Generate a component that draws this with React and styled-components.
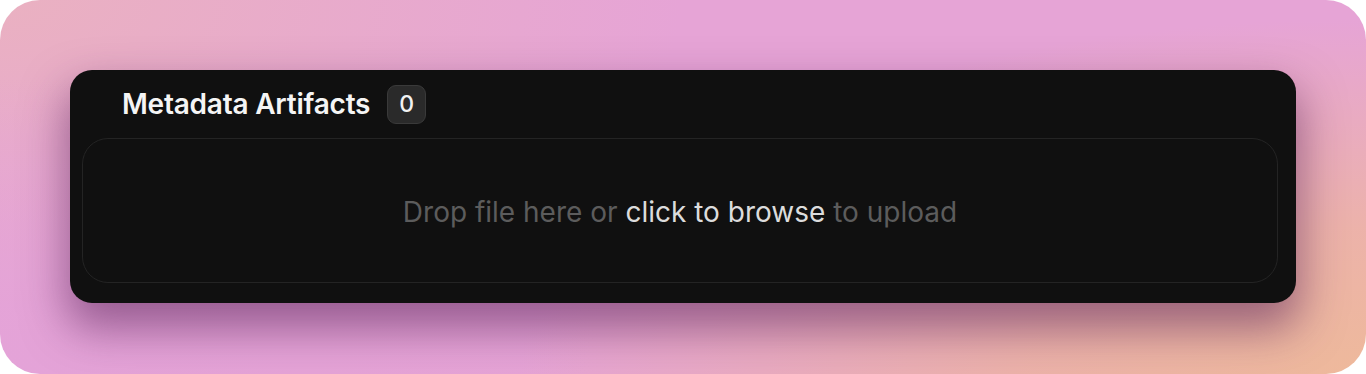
import React from "react";
import styled, { createGlobalStyle } from "styled-components";

const Global = createGlobalStyle`
  html, body { margin: 0; padding: 0; background: #ffffff; }
  * { box-sizing: border-box; }
  body { font-family: Inter, "Noto Sans", sans-serif; }
`;

const Backdrop = styled.div`
  width: 1366px;
  height: 374px;
  border-radius: 40px;
  overflow: hidden;
  padding: 70px 70px 71px 70px;
  background:
    radial-gradient(ellipse 62% 95% at 100% 100%, #eeb99b 0%, rgba(238,182,158,0.8) 40%, rgba(233,170,190,0) 100%),
    radial-gradient(ellipse 45% 80% at 0% 100%, #e4a3d8 0%, rgba(228,163,216,0) 100%),
    radial-gradient(ellipse 50% 90% at 0% 0%, #eab1c1 0%, rgba(234,177,193,0) 100%),
    #e6a4d6;
`;

const Card = styled.section`
  height: 233px;
  background: #101010;
  border-radius: 22px;
  padding: 0 18px 20px 12px;
  display: flex;
  flex-direction: column;
  box-shadow: 0 22px 44px 4px rgba(90, 35, 90, 0.55);
`;

const Header = styled.div`
  height: 68px;
  display: flex;
  align-items: center;
  gap: 17px;
  padding-left: 40px;
`;

const Title = styled.h2`
  margin: 0;
  font-family: Inter, sans-serif;
  font-weight: 600;
  font-size: 28px;
  letter-spacing: -0.22px;
  color: #f5f5f5;
`;

const Badge = styled.span`
  min-width: 39px;
  height: 39px;
  padding: 0 10px;
  border-radius: 9px;
  background: #2a2a2a;
  border: 1px solid #3a3a3a;
  color: #f2f2f2;
  font-family: Inter, sans-serif;
  font-weight: 500;
  font-size: 23px;
  display: inline-flex;
  align-items: center;
  justify-content: center;
`;

const DropZone = styled.div`
  flex: 1;
  border: 1px solid #242424;
  border-radius: 26px;
  display: flex;
  align-items: center;
  justify-content: center;
  padding-top: 2px;
  font-family: Inter, sans-serif;
  font-size: 28px;
  color: #5c5c5c;
  cursor: pointer;
`;

const Link = styled.span`
  color: #dcdcdc;
`;

export default function App() {
  return (
    <>
      <Global />
      <Backdrop>
        <Card>
          <Header>
            <Title>Metadata Artifacts</Title>
            <Badge>0</Badge>
          </Header>
          <DropZone>
            <span>
              Drop file here or <Link>click to browse</Link> to upload
            </span>
          </DropZone>
        </Card>
      </Backdrop>
    </>
  );
}
